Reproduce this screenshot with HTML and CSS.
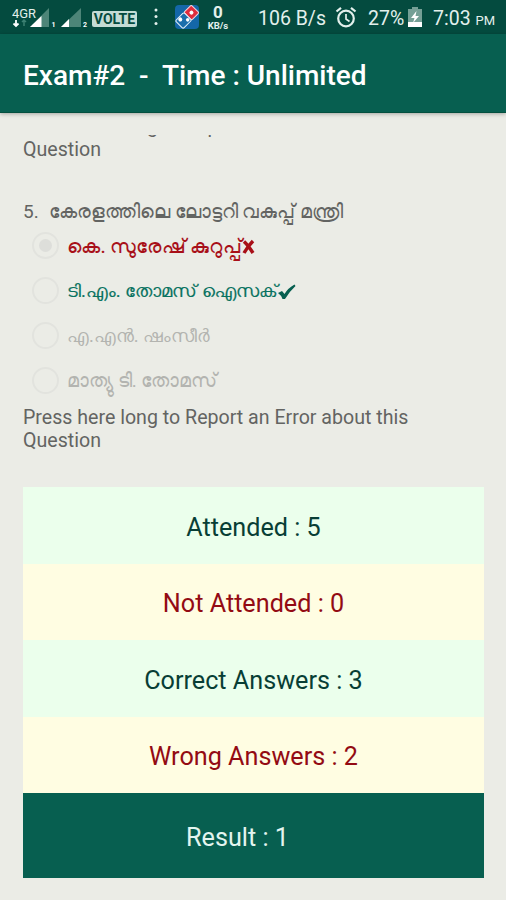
FILE: index.html
```html
<!DOCTYPE html>
<html lang="en">
<head>
  <meta charset="UTF-8">
  <meta name="viewport" content="width=device-width, initial-scale=1.0">
  <title>Exam#2</title>
  <link rel="stylesheet" href="styles.css">
</head>
<body>

  <div class="status-bar">
    <svg class="signals" width="80" height="34" viewBox="0 0 80 34">
      <text class="net" x="0" y="18" textLength="24" lengthAdjust="spacingAndGlyphs">4GR</text>
      <path d="M4 20v6M1.500 23.500L4 26l2.500-2.500" fill="none" stroke="#fff" stroke-width="1.800"/>
      <path d="M12 26v-5M10 22l2-2 2 2" fill="none" stroke="#3c8072" stroke-width="1.500"/>
      <path d="M37 8v19H18z" fill="#4d8578"/>
      <path d="M29.500 16v11H18z" fill="#fff"/>
      <text class="sim" x="39.500" y="27">1</text>
      <path d="M69 8v19H49z" fill="#4d8578"/>
      <path d="M57 19v8h-8z" fill="#fff"/>
      <text class="sim" x="71" y="27">2</text>
    </svg>
    <span class="volte">VOLTE</span>
    <svg class="dots" width="4" height="18" viewBox="0 0 4 18">
      <circle cx="2" cy="2" r="1.500"/>
      <circle cx="2" cy="8.500" r="1.500"/>
      <circle cx="2" cy="15.500" r="1.500"/>
    </svg>
    <svg class="pizza" width="24" height="24" viewBox="0 0 24 24">
      <rect width="24" height="24" rx="4" fill="#1467a8"/>
      <g transform="rotate(45 12 12)">
        <rect x="6.500" y="0.500" width="11" height="10.500" rx="1.500" fill="#e02c3d" stroke="#f3d6dd"/>
        <rect x="6.500" y="11" width="11" height="12" rx="1.500" fill="#1a6eac" stroke="#e4f0f8"/>
        <circle cx="12" cy="5.700" r="2" fill="#fff"/>
        <circle cx="9" cy="18.500" r="2" fill="#fff"/>
        <circle cx="14.500" cy="13.500" r="1.800" fill="#fff"/>
      </g>
    </svg>
    <div class="rate">
      <b>0</b>
      <small>KB/s</small>
    </div>
    <span class="speed">106 B/s</span>
    <svg class="alarm" width="22" height="22" viewBox="0 0 22 22" fill="none" stroke="#e3f0ec" stroke-width="2.200">
      <circle cx="11" cy="12.500" r="7.800"/>
      <path d="M11 8v5l3.500 2.500" stroke-width="1.700"/>
      <path d="M1.500 5.500L6 1.800M20.500 5.500L16 1.800"/>
    </svg>
    <span class="percent">27%</span>
    <svg class="battery" width="14" height="20" viewBox="0 0 14 20">
      <path d="M4 0h6v2h4v18H0V2h4z" fill="#75a096"/>
      <path d="M0 15h14v5H0z" fill="#fff"/>
      <path d="M8.500 4L3 11h3.500L5 16l6-7H7.500z" fill="#fff"/>
    </svg>
    <span class="clock">7:03 <small>PM</small></span>
  </div>

  <header class="app-bar">
    <h1>Exam#2&nbsp; -&nbsp; Time : Unlimited</h1>
  </header>

  <main class="exam">
    <div class="scroll">
      <p class="report previous">Press here long to Report an Error about this Question</p>

      <h2 class="question" lang="ml"><span class="number">5.</span><span>കേരളത്തിലെ ലോട്ടറി വകുപ്പ് മന്ത്രി</span></h2>

      <ul class="options" lang="ml">
        <li class="option wrong"><i class="radio checked"></i><span>കെ. സുരേഷ് കുറുപ്പ്</span><svg class="mark" width="13" height="16" viewBox="0 0 13 16"><path d="M2 2.500Q6 6 11 14M11 2Q6 7 2 14" fill="none" stroke="#a80f18" stroke-width="3.500"/></svg></li>
        <li class="option right"><i class="radio"></i><span>ടി.എം. തോമസ് ഐസക്</span><svg class="mark" width="18" height="16" viewBox="0 0 18 16"><path d="M0 9L4 7L6.500 10Q10 4 16.500 0.500L17.500 2Q11 8 7 15H4.500Q3 11 0 9z" fill="#075f50"/></svg></li>
        <li class="option"><i class="radio"></i><span>എ.എൻ. ഷംസീർ</span></li>
        <li class="option last"><i class="radio"></i><span>മാത്യു ടി. തോമസ്</span></li>
      </ul>

      <p class="report">Press here long to Report an Error about this Question</p>

      <section class="summary">
        <div class="row good">Attended : 5</div>
        <div class="row bad">Not Attended : 0</div>
        <div class="row good">Correct Answers : 3</div>
        <div class="row bad">Wrong Answers : 2</div>
        <div class="row result">Result : 1</div>
      </section>
    </div>
  </main>

</body>
</html>
```

FILE: styles.css
```css
* {
  margin: 0;
  padding: 0;
  box-sizing: border-box;
}

body {
  height: 900px;
  overflow: hidden;
  font-family: Roboto, "Liberation Sans", sans-serif;
  background-color: #ebece6;
  color: #636462;
}

.status-bar {
  display: flex;
  align-items: center;
  height: 34px;
  padding-left: 12px;
  background: #044b3f;
  color: #e3f0ec;
  font-size: 19px;
  white-space: nowrap;
}

.net {
  font-size: 13px;
  fill: #e3f0ec;
}

.sim {
  font-size: 7px;
  font-weight: bold;
  fill: #fff;
}

.volte {
  width: 45px;
  height: 16px;
  margin-top: 3px;
  border-radius: 2px;
  background: #c4dcd5;
  color: #044b3f;
  font-size: 14px;
  font-weight: 700;
  line-height: 16px;
  text-align: center;
}

.dots {
  margin-left: 17px;
  fill: #e3f0ec;
}

.pizza {
  margin-left: 17px;
}

.rate {
  width: 26px;
  margin-left: 6px;
  text-align: center;
}

.rate b,
.rate small {
  display: block;
}

.rate b {
  font-size: 17px;
  line-height: 18px;
}

.rate small {
  font-size: 9.5px;
  font-weight: 700;
  line-height: 10px;
}

.speed {
  width: 70px;
  margin: 2px 0 0 27px;
  font-size: 19.5px;
}

.alarm {
  margin-left: 7px;
}

.percent {
  width: 38px;
  margin: 2px 0 0 11px;
  font-size: 19.5px;
}

.battery {
  margin-left: 2px;
}

.clock {
  margin: 2px 0 0 11px;
  font-size: 19.5px;
}

.clock small {
  font-size: 13px;
}

.app-bar {
  display: flex;
  align-items: center;
  height: 79px;
  padding: 4px 0 0 23px;
  background: #075f50;
  border-bottom: 1px solid #04503f;
  box-shadow: 0 1px 4px rgba(0, 0, 0, 0.3);
}

.app-bar h1 {
  color: #fff;
  font-size: 28px;
  font-weight: 500;
  white-space: nowrap;
}

/* the list is scrolled, so the top line is cut off */
.exam {
  height: 765px;
  margin-top: 22px;
  overflow: hidden;
}

.scroll {
  margin-top: -20px;
  padding: 0 22px 0 23px;
}

.report {
  font-size: 19.6px;
  line-height: 23px;
}

.previous {
  margin-bottom: 38px;
}

.question {
  display: flex;
  align-items: center;
  height: 24px;
  font-size: 19px;
  font-weight: 400;
  white-space: nowrap;
}

.number {
  width: 26px;
}

.options {
  margin-bottom: 3px;
  list-style: none;
}

.option {
  display: flex;
  align-items: center;
  height: 45px;
  padding-left: 9px;
  color: #b3b4b0;
  font-size: 18.4px;
  white-space: nowrap;
}

.radio {
  display: flex;
  width: 27px;
  height: 27px;
  margin-right: 8px;
  border: 2px solid #e2e3de;
  border-radius: 50%;
}

.checked::after {
  content: "";
  width: 13px;
  height: 13px;
  margin: auto;
  border-radius: 50%;
  background: #dddeda;
}

.wrong {
  color: #a80f18;
  font-size: 20px;
  letter-spacing: 0.5px;
  word-spacing: -2px;
  -webkit-text-stroke: 0.1px;
}

.right {
  color: #087260;
  -webkit-text-stroke: 0.2px;
}

.last {
  font-size: 19px;
}

.mark {
  margin-top: 2px;
}

.summary {
  margin-top: 35px;
}

.row {
  display: flex;
  align-items: center;
  justify-content: center;
  height: 76.5px;
  padding-top: 4px;
  font-size: 25.2px;
}

.good {
  background: #ebffec;
  color: #083e35;
}

.bad {
  background: #fffde2;
  color: #930b13;
}

.result {
  height: 85px;
  padding-right: 32px;
  background: #075f50;
  color: #e3f5ef;
}
```
